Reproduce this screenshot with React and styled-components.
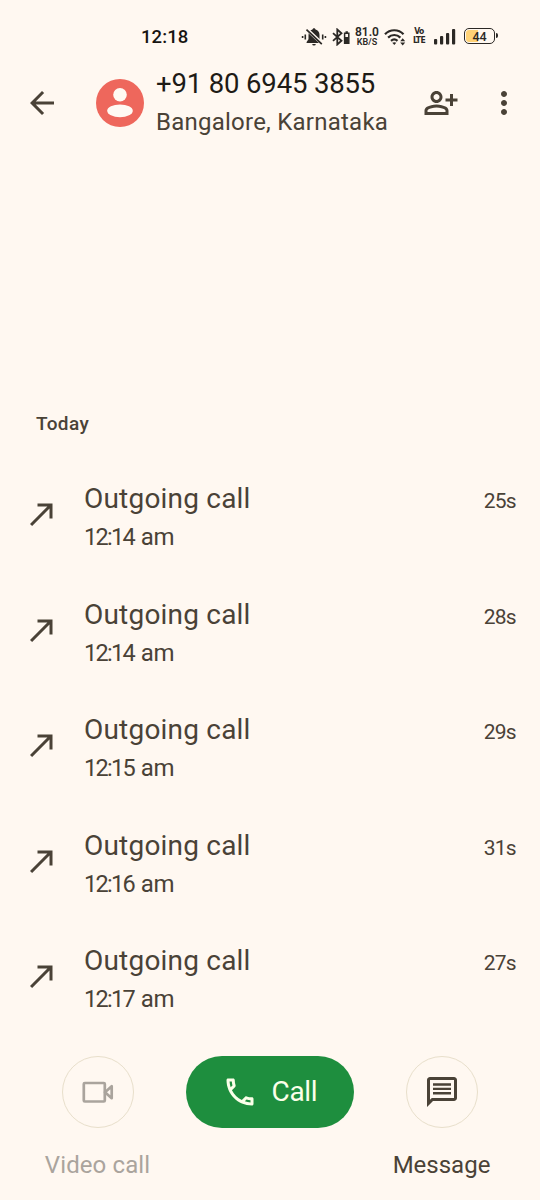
import React from "react";
import styled, { createGlobalStyle } from "styled-components";

const calls = [
  { time: "12:14", length: "25s" },
  { time: "12:14", length: "28s" },
  { time: "12:15", length: "29s" },
  { time: "12:16", length: "31s" },
  { time: "12:17", length: "27s" },
];

const Icon = ({ d, size = 36 }) => (
  <svg width={size} height={size} viewBox="0 0 24 24" fill="currentColor">
    <path d={d} />
  </svg>
);

const icons = {
  back: "M20 11H7.83l5.59-5.59L12 4l-8 8 8 8 1.41-1.41L7.83 13H20v-2z",
  addPerson:
    "M20 9V6h-2v3h-3v2h3v3h2v-3h3V9h-3zM9 12c2.21 0 4-1.79 4-4s-1.79-4-4-4-4 1.79-4 4 1.79 4 4 4zm0-6c1.1 0 2 .9 2 2s-.9 2-2 2-2-.9-2-2 .9-2 2-2zm6.39 8.56C13.71 13.7 11.53 13 9 13s-4.71.7-6.39 1.56C1.61 15.07 1 16.1 1 17.22V20h16v-2.78c0-1.12-.61-2.15-1.61-2.66zM15 18H3v-.78c0-.38.2-.72.52-.88C4.71 15.73 6.63 15 9 15s4.29.73 5.48 1.34c.32.16.52.5.52.88V18z",
  more: "M12 8c1.1 0 2-.9 2-2s-.9-2-2-2-2 .9-2 2 .9 2 2 2zm0 2c-1.1 0-2 .9-2 2s.9 2 2 2 2-.9 2-2-.9-2-2-2zm0 6c-1.1 0-2 .9-2 2s.9 2 2 2 2-.9 2-2-.9-2-2-2z",
  outgoing: "M9 5v2h6.59L4 18.59 5.41 20 17 8.41V15h2V5z",
  phone:
    "M6.54 5c.06.89.21 1.76.45 2.59l-1.2 1.2c-.41-1.2-.67-2.47-.76-3.79h1.51m9.86 12.02c.85.24 1.72.39 2.6.45v1.49c-1.32-.09-2.59-.35-3.8-.75l1.2-1.19M7.5 3H4c-.55 0-1 .45-1 1 0 9.39 7.61 17 17 17 .55 0 1-.45 1-1v-3.49c0-.55-.45-1-1-1-1.24 0-2.45-.2-3.57-.57-.1-.04-.21-.05-.31-.05-.26 0-.51.1-.71.29l-2.2 2.2c-2.83-1.45-5.15-3.76-6.59-6.59l2.2-2.2c.28-.28.36-.67.25-1.02C8.7 6.45 8.5 5.25 8.5 4c0-.55-.45-1-1-1z",
  message:
    "M20 2H4c-1.1 0-2 .9-2 2v18l4-4h14c1.1 0 2-.9 2-2V4c0-1.1-.9-2-2-2zm0 14H5.2L4 17.2V4h16v12zM6 12h12v1.6H6zM6 9.1h12v1.6H6zM6 6.2h12v1.6H6z",
};

const BellOff = () => (
  <svg width="26" height="22" viewBox="0 0 26 22" fill="#2b2825">
    <path d="M13 2.2c-.9 0-1.4.6-1.5 1.3C8.900 4.200 7.500 6.300 7.500 9v4.300L5.600 16v1h14.800v-1l-1.900-2.700V9c0-2.700-1.400-4.800-4-5.500C14.400 2.800 13.900 2.200 13 2.200zM11.200 18h3.600a1.800 1.600 0 0 1-3.600 0z" />
    <path d="M6 3.500l15.500 14.500" stroke="#fff8f1" strokeWidth="3.400" />
    <path d="M5.500 3.600L20.800 18.200" stroke="#2b2825" strokeWidth="1.700" />
    <path
      d="M4.300 8.500v5M1.600 10v2M21.700 8.500v5M24.400 10v2"
      stroke="#2b2825"
      strokeWidth="1.600"
    />
  </svg>
);

const Bluetooth = () => (
  <svg width="18" height="18" viewBox="0 0 18 18" fill="none">
    <path
      d="M1 5.200l8.500 7.600-4.200 3.700V1.500l4.200 3.700L1 12.800"
      stroke="#2b2825"
      strokeWidth="1.800"
    />
    <path
      d="M12.600 5.300h4.200v10h-4.200zM13.500 3.900h2.400"
      stroke="#2b2825"
      strokeWidth="1.500"
    />
    <path d="M12.500 9h4v6h-4z" fill="#2b2825" />
  </svg>
);

const Wifi = () => (
  <svg width="23" height="20" viewBox="0 0 23 20" fill="none">
    <path
      d="M1 7.200C6 1.900 14.500 1.900 19.500 7.200M4.100 10.600c3.500-3.500 8.800-3.500 12.300 0M7 13.900c2.100-1.900 4.400-1.900 6.500 0"
      stroke="#2b2825"
      strokeWidth="2.200"
    />
    <path d="M8.300 15.800c1.200-.9 2.800-.9 4 0l-2 2.300z" fill="#2b2825" />
    <path
      d="M16.200 14.200l2.500-2.900 2.500 2.900zM16.200 15.600l2.500 2.900 2.500-2.900z"
      fill="#2b2825"
    />
  </svg>
);

const Signal = () => (
  <svg width="22" height="17" viewBox="0 0 22 17" fill="#2b2825">
    <rect x="0" y="11" width="3.200" height="5.500" rx="1" />
    <rect x="6" y="8" width="3.200" height="8.500" rx="1" />
    <rect x="12" y="5" width="3.200" height="11.500" rx="1" />
    <rect x="18" y="1" width="3.200" height="15.500" rx="1" />
  </svg>
);

const Person = () => (
  <svg width="48" height="48" viewBox="0 0 48 48" fill="#fffaf3">
    <circle cx="24" cy="15.800" r="6.800" />
    <ellipse cx="24" cy="31.800" rx="12.800" ry="6.400" />
  </svg>
);

const Video = () => (
  <svg width="36" height="36" viewBox="0 0 36 36" fill="none">
    <g stroke="currentColor" strokeWidth="2.700" strokeLinejoin="round">
      <rect x="3.800" y="9" width="21" height="18.500" rx="1" />
      <path d="M25 18.200l6.700-6v12z" />
    </g>
  </svg>
);

const App = () => {
  return (
    <Screen>
      <GlobalStyle />
      <StatusBar>
        <Clock>12:18</Clock>
        <BellOff />
        <Bluetooth />
        <Speed>
          <span>81.0</span>
          <small>KB/S</small>
        </Speed>
        <Wifi />
        <Volte>
          <span>Vo</span>
          <span>LTE</span>
        </Volte>
        <Signal />
        <Battery>
          <span>44</span>
        </Battery>
      </StatusBar>

      <Header>
        <IconButton>
          <Icon d={icons.back} />
        </IconButton>
        <Avatar>
          <Person />
        </Avatar>
        <Contact>
          <h1>+91 80 6945 3855</h1>
          <p>Bangalore, Karnataka</p>
        </Contact>
        <IconButton>
          <Icon d={icons.addPerson} />
        </IconButton>
        <IconButton>
          <Icon d={icons.more} />
        </IconButton>
      </Header>

      <History>
        <Day>Today</Day>
        {calls.map((call, i) => (
          <Row key={i}>
            <Icon d={icons.outgoing} />
            <Details>
              <h2>Outgoing call</h2>
              <p>
                <Digits>{call.time}</Digits> am
              </p>
            </Details>
            <Length>{call.length}</Length>
          </Row>
        ))}
      </History>

      <Actions>
        <Action $color="#aaa49d" $spacing="0.1px">
          <Round>
            <Video />
          </Round>
          <span>Video call</span>
        </Action>
        <CallButton>
          <Icon d={icons.phone} />
          Call
        </CallButton>
        <Action $color="#4a4237" $spacing="0px">
          <Round>
            <Icon d={icons.message} />
          </Round>
          <span>Message</span>
        </Action>
      </Actions>
    </Screen>
  );
};

const GlobalStyle = createGlobalStyle`
  * {
    box-sizing: border-box;
  }

  body {
    margin: 0;
    background: #fff8f1;
  }

  h1, h2, p {
    margin: 0;
    font-weight: inherit;
  }

  svg {
    display: block;
    flex-shrink: 0;
  }
`;

const Screen = styled.div`
  width: 540px;
  height: 1200px;
  overflow: hidden;
  display: flex;
  flex-direction: column;
  background: #fff8f1;
  color: #4a4237;
  font-family: Roboto, "Liberation Sans", sans-serif;
  font-weight: 380;
`;

const StatusBar = styled.div`
  height: 67px;
  padding: 6px 0 0 141px;
  display: flex;
  align-items: center;
  color: #2b2825;
`;

const Clock = styled.div`
  width: 160px;
  font-size: 18.5px;
  font-weight: 500;
  letter-spacing: 0.1px;
  color: #171411;

  & + svg + svg {
    margin-left: 5px;
  }
`;

const Speed = styled.div`
  width: 24px;
  margin: -2px 5px 0 5px;
  display: flex;
  flex-direction: column;
  align-items: center;
  font-size: 12px;
  line-height: 12px;
  font-weight: 600;

  small {
    font-size: 9px;
    line-height: 8px;
  }
`;

const Volte = styled.div`
  width: 12px;
  margin: -1px 9px 0 6px;
  display: flex;
  flex-direction: column;
  align-items: center;
  font-family: "DejaVu Sans Condensed", "Liberation Sans", sans-serif;
  font-size: 8.5px;
  line-height: 9px;
  font-weight: 700;
  letter-spacing: -0.7px;
`;

const Battery = styled.div`
  position: relative;
  width: 31px;
  height: 16px;
  margin: -1px 0 0 8px;
  border: 1.5px solid #2b2825;
  border-radius: 5px;
  display: flex;
  align-items: center;
  justify-content: center;
  font-size: 12.5px;
  font-weight: 500;
  background: linear-gradient(90deg, #ffd276 44%, #fff8f1 44%);
  background-clip: content-box;
  padding: 1px;

  &::after {
    content: "";
    position: absolute;
    right: -4px;
    top: 4px;
    width: 2px;
    height: 5px;
    border-radius: 0 2px 2px 0;
    background: #2b2825;
  }
`;

const Header = styled.div`
  height: 72px;
  padding: 0 18px 0 24px;
  display: flex;
  align-items: center;
`;

const IconButton = styled.div`
  width: 36px;
  display: flex;

  & + & {
    margin-left: 27px;
  }
`;

const Avatar = styled.div`
  width: 48px;
  height: 48px;
  margin-left: 36px;
  border-radius: 50%;
  background: #ee675c;
`;

const Contact = styled.div`
  flex: 1;
  padding-left: 12px;
  padding-bottom: 1px;
  white-space: nowrap;

  h1 {
    font-size: 27.5px;
    line-height: 38px;
    letter-spacing: -0.15px;
    color: #1e1b16;
  }

  p {
    font-size: 24px;
    line-height: 38px;
    letter-spacing: 0.24px;
  }
`;

const History = styled.div`
  height: 916.5px;
  flex-shrink: 0;
  padding: 270px 24px 0;
`;

const Day = styled.div`
  padding: 0 12px;
  font-size: 19px;
  line-height: 30px;
  font-weight: 500;
  letter-spacing: 0.4px;
`;

const Row = styled.div`
  height: 115.5px;
  padding-top: 37px;
  display: flex;

  > svg {
    margin-top: 20px;
  }
`;

const Details = styled.div`
  flex: 1;
  padding-left: 24px;

  h2 {
    font-size: 28px;
    line-height: 45px;
    letter-spacing: 0.2px;
  }

  p {
    font-size: 24px;
    line-height: 32px;
    letter-spacing: -0.3px;
    word-spacing: 1px;
  }
`;

const Digits = styled.span`
  font-size: 23.5px;
  letter-spacing: -1.7px;
`;

const Length = styled.div`
  padding-top: 12px;
  font-size: 21px;
  line-height: 26px;
  letter-spacing: -0.7px;
`;

const Actions = styled.div`
  flex: 1;
  padding: 0 37px 0 36px;
  display: flex;
  justify-content: space-between;
  align-items: flex-start;
`;

const Action = styled.div`
  width: 123px;
  display: flex;
  flex-direction: column;
  align-items: center;
  font-size: 24px;
  line-height: 32px;
  letter-spacing: ${(props) => props.$spacing};
  color: ${(props) => props.$color};

  span {
    margin-top: 21px;
  }
`;

const Round = styled.div`
  width: 72px;
  height: 72px;
  border: 1.5px solid #e8dfcb;
  border-radius: 50%;
  display: flex;
  align-items: center;
  justify-content: center;
`;

const CallButton = styled.div`
  width: 168px;
  height: 72px;
  padding-left: 36px;
  border-radius: 36px;
  display: flex;
  align-items: center;
  gap: 14px;
  background: #1e8e3e;
  color: #fbffe9;
  font-size: 28px;
  letter-spacing: -0.3px;
`;

export default App;
